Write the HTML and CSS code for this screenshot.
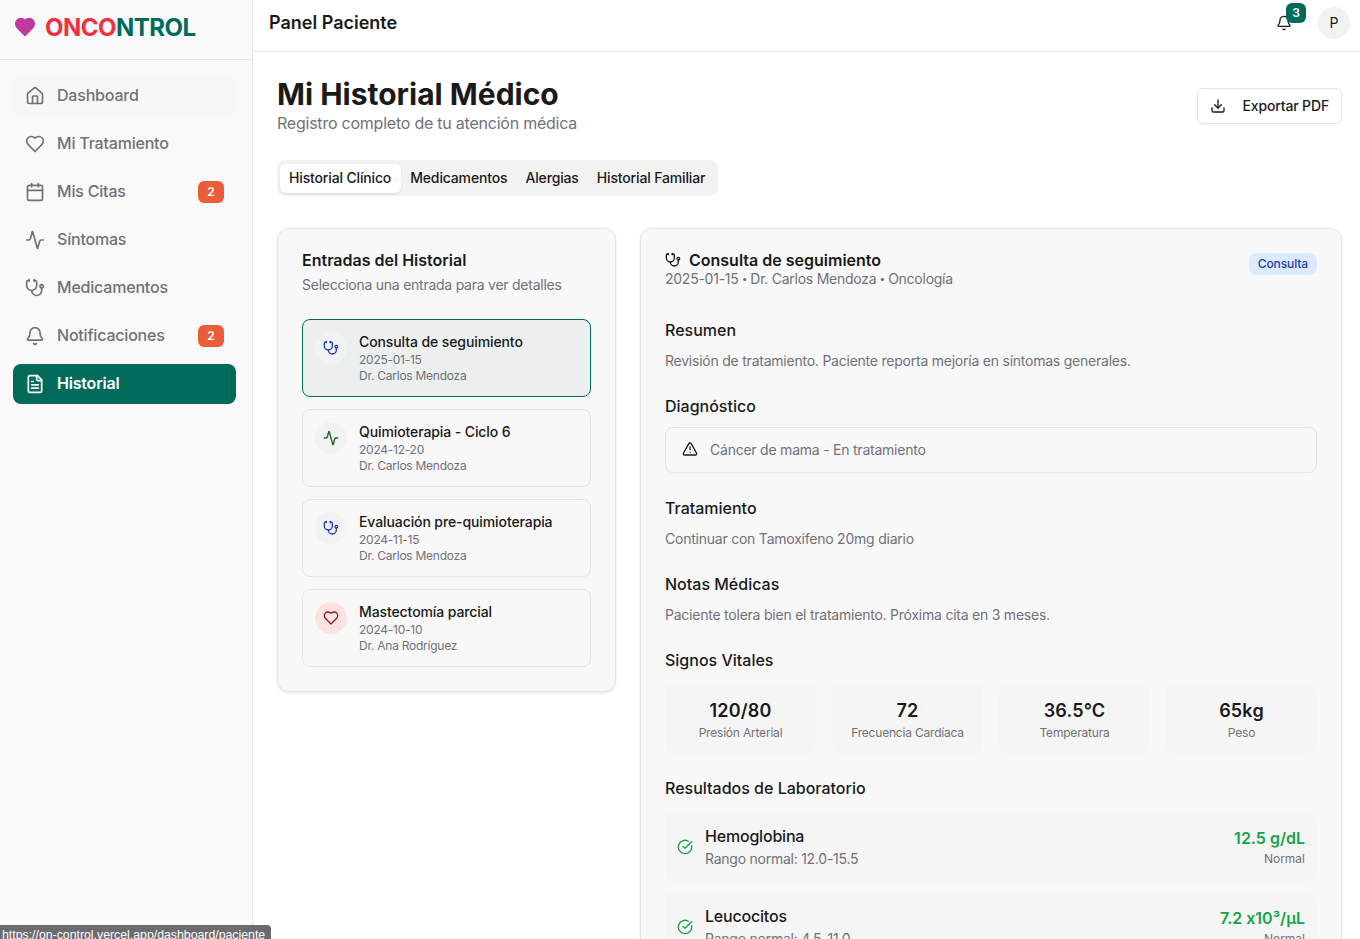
FILE: index.html
```html
<!DOCTYPE html>
<html lang="es">
<head>
    <meta charset="UTF-8">
    <meta name="viewport" content="width=device-width, initial-scale=1.0">
    <title>Mi Historial Médico - OncoControl</title>
    <link rel="stylesheet" href="styles.css">
</head>
<body>
    <svg class="sprite" xmlns="http://www.w3.org/2000/svg">
        <symbol id="i-home" viewBox="0 0 24 24"><path d="M15 21v-8a1 1 0 0 0-1-1h-4a1 1 0 0 0-1 1v8"/><path d="M3 10a2 2 0 0 1 .709-1.528l7-5.999a2 2 0 0 1 2.582 0l7 5.999A2 2 0 0 1 21 10v9a2 2 0 0 1-2 2H5a2 2 0 0 1-2-2z"/></symbol>
        <symbol id="i-heart" viewBox="0 0 24 24"><path d="M19 14c1.49-1.46 3-3.21 3-5.5A5.5 5.5 0 0 0 16.5 3c-1.76 0-3 .5-4.5 2-1.5-1.5-2.74-2-4.5-2A5.5 5.5 0 0 0 2 8.5c0 2.3 1.5 4.05 3 5.5l7 7Z"/></symbol>
        <symbol id="i-calendar" viewBox="0 0 24 24"><path d="M8 2v4"/><path d="M16 2v4"/><rect x="3" y="4" width="18" height="18" rx="2"/><path d="M3 10h18"/></symbol>
        <symbol id="i-activity" viewBox="0 0 24 24"><path d="M22 12h-2.48a2 2 0 0 0-1.93 1.46l-2.35 8.36a.25.25 0 0 1-.48 0L9.24 2.18a.25.25 0 0 0-.48 0l-2.35 8.36A2 2 0 0 1 4.49 12H2"/></symbol>
        <symbol id="i-stethoscope" viewBox="0 0 24 24"><path d="M11 2v2"/><path d="M5 2v2"/><path d="M5 3H4a2 2 0 0 0-2 2v4a6 6 0 0 0 12 0V5a2 2 0 0 0-2-2h-1"/><path d="M8 15a6 6 0 0 0 12 0v-3"/><circle cx="20" cy="10" r="2"/></symbol>
        <symbol id="i-bell" viewBox="0 0 24 24"><path d="M10.268 21a2 2 0 0 0 3.464 0"/><path d="M3.262 15.326A1 1 0 0 0 4 17h16a1 1 0 0 0 .74-1.673C19.41 13.956 18 12.499 18 8A6 6 0 0 0 6 8c0 4.499-1.411 5.956-2.738 7.326"/></symbol>
        <symbol id="i-file" viewBox="0 0 24 24"><path d="M15 2H6a2 2 0 0 0-2 2v16a2 2 0 0 0 2 2h12a2 2 0 0 0 2-2V7Z"/><path d="M14 2v4a2 2 0 0 0 2 2h4"/><path d="M10 9H8"/><path d="M16 13H8"/><path d="M16 17H8"/></symbol>
        <symbol id="i-download" viewBox="0 0 24 24"><path d="M21 15v4a2 2 0 0 1-2 2H5a2 2 0 0 1-2-2v-4"/><polyline points="7 10 12 15 17 10"/><line x1="12" y1="15" x2="12" y2="3"/></symbol>
        <symbol id="i-alert" viewBox="0 0 24 24"><path d="m21.73 18-8-14a2 2 0 0 0-3.48 0l-8 14A2 2 0 0 0 4 21h16a2 2 0 0 0 1.73-3"/><path d="M12 9v4"/><path d="M12 17h.01"/></symbol>
        <symbol id="i-check" viewBox="0 0 24 24"><path d="M21.801 10A10 10 0 1 1 17 3.335"/><path d="m9 11 3 3L22 4"/></symbol>
    </svg>

    <div class="app">
        <aside class="sidebar">
            <div class="logo">
                <svg class="logo-heart" viewBox="0 0 24 24"><use href="#i-heart"/></svg>
                <span class="logo-text"><span class="logo-red">ONCO</span><span class="logo-green">NTROL</span></span>
            </div>
            <nav class="nav">
                <a class="nav-item hovered" href="#"><svg class="icon"><use href="#i-home"/></svg><span>Dashboard</span></a>
                <a class="nav-item" href="#"><svg class="icon"><use href="#i-heart"/></svg><span>Mi Tratamiento</span></a>
                <a class="nav-item" href="#"><svg class="icon"><use href="#i-calendar"/></svg><span>Mis Citas</span><b class="nav-badge">2</b></a>
                <a class="nav-item" href="#"><svg class="icon"><use href="#i-activity"/></svg><span>Síntomas</span></a>
                <a class="nav-item" href="#"><svg class="icon"><use href="#i-stethoscope"/></svg><span>Medicamentos</span></a>
                <a class="nav-item" href="#"><svg class="icon"><use href="#i-bell"/></svg><span>Notificaciones</span><b class="nav-badge">2</b></a>
                <a class="nav-item active" href="#"><svg class="icon"><use href="#i-file"/></svg><span>Historial</span></a>
            </nav>
        </aside>

        <div class="page">
            <header class="topbar">
                <h2>Panel Paciente</h2>
                <div class="topbar-right">
                    <div class="bell">
                        <svg class="icon-sm"><use href="#i-bell"/></svg>
                        <span class="bell-badge">3</span>
                    </div>
                    <div class="avatar">P</div>
                </div>
            </header>

            <main class="content">
                <div class="page-head">
                    <div>
                        <h1>Mi Historial Médico</h1>
                        <p class="subtitle">Registro completo de tu atención médica</p>
                    </div>
                    <button class="export" type="button"><svg class="icon-sm"><use href="#i-download"/></svg>Exportar PDF</button>
                </div>

                <div class="tabs">
                    <span class="tab active">Historial Clínico</span>
                    <span class="tab">Medicamentos</span>
                    <span class="tab">Alergias</span>
                    <span class="tab">Historial Familiar</span>
                </div>

                <div class="columns">
                    <section class="card list-card">
                        <h3>Entradas del Historial</h3>
                        <p class="list-sub">Selecciona una entrada para ver detalles</p>
                        <div class="entries">
                            <div class="entry selected">
                                <div class="entry-icon blue"><svg class="icon-sm"><use href="#i-stethoscope"/></svg></div>
                                <div>
                                    <div class="entry-title">Consulta de seguimiento</div>
                                    <div class="entry-meta">2025-01-15</div>
                                    <div class="entry-meta">Dr. Carlos Mendoza</div>
                                </div>
                            </div>
                            <div class="entry">
                                <div class="entry-icon green"><svg class="icon-sm"><use href="#i-activity"/></svg></div>
                                <div>
                                    <div class="entry-title">Quimioterapia - Ciclo 6</div>
                                    <div class="entry-meta">2024-12-20</div>
                                    <div class="entry-meta">Dr. Carlos Mendoza</div>
                                </div>
                            </div>
                            <div class="entry">
                                <div class="entry-icon blue"><svg class="icon-sm"><use href="#i-stethoscope"/></svg></div>
                                <div>
                                    <div class="entry-title">Evaluación pre-quimioterapia</div>
                                    <div class="entry-meta">2024-11-15</div>
                                    <div class="entry-meta">Dr. Carlos Mendoza</div>
                                </div>
                            </div>
                            <div class="entry">
                                <div class="entry-icon red"><svg class="icon-sm"><use href="#i-heart"/></svg></div>
                                <div>
                                    <div class="entry-title">Mastectomía parcial</div>
                                    <div class="entry-meta">2024-10-10</div>
                                    <div class="entry-meta">Dr. Ana Rodríguez</div>
                                </div>
                            </div>
                        </div>
                    </section>

                    <section class="card detail-card">
                        <div class="detail-head">
                            <div>
                                <h3 class="detail-title"><svg class="icon-sm"><use href="#i-stethoscope"/></svg>Consulta de seguimiento</h3>
                                <p class="detail-meta">2025-01-15 <span class="dot">•</span> Dr. Carlos Mendoza <span class="dot">•</span> Oncología</p>
                            </div>
                            <span class="tag">Consulta</span>
                        </div>

                        <div class="block">
                            <h4>Resumen</h4>
                            <p>Revisión de tratamiento. Paciente reporta mejoría en síntomas generales.</p>
                        </div>
                        <div class="block">
                            <h4>Diagnóstico</h4>
                            <div class="diagnosis"><svg class="icon-sm"><use href="#i-alert"/></svg><span>Cáncer de mama - En tratamiento</span></div>
                        </div>
                        <div class="block">
                            <h4>Tratamiento</h4>
                            <p>Continuar con Tamoxifeno 20mg diario</p>
                        </div>
                        <div class="block">
                            <h4>Notas Médicas</h4>
                            <p>Paciente tolera bien el tratamiento. Próxima cita en 3 meses.</p>
                        </div>
                        <div class="block">
                            <h4 class="tight">Signos Vitales</h4>
                            <div class="vitals">
                                <div class="vital"><strong>120/80</strong><span>Presión Arterial</span></div>
                                <div class="vital"><strong>72</strong><span>Frecuencia Cardíaca</span></div>
                                <div class="vital"><strong>36.5°C</strong><span>Temperatura</span></div>
                                <div class="vital"><strong>65kg</strong><span>Peso</span></div>
                            </div>
                        </div>
                        <div class="block">
                            <h4 class="tight">Resultados de Laboratorio</h4>
                            <div class="labs">
                                <div class="lab">
                                    <svg class="icon-sm"><use href="#i-check"/></svg>
                                    <div class="lab-name"><strong>Hemoglobina</strong><span>Rango normal: 12.0-15.5</span></div>
                                    <div class="lab-value"><strong>12.5 g/dL</strong><span>Normal</span></div>
                                </div>
                                <div class="lab">
                                    <svg class="icon-sm"><use href="#i-check"/></svg>
                                    <div class="lab-name"><strong>Leucocitos</strong><span>Rango normal: 4.5-11.0</span></div>
                                    <div class="lab-value"><strong>7.2 x10³/μL</strong><span>Normal</span></div>
                                </div>
                            </div>
                        </div>
                    </section>
                </div>
            </main>
        </div>
    </div>

    <div class="status-url">https://on-control.vercel.app/dashboard/paciente</div>
</body>
</html>
```

FILE: styles.css
```css
* {
    box-sizing: border-box;
}
html, body {
    height: 100%;
    margin: 0;
    overflow: hidden;
}
body {
    font-family: Inter, "Noto Sans", sans-serif;
    font-feature-settings: "calt" 0;
    background-color: white;
    color: #1a1a1a;
}
h1, h2, h3, h4, p {
    margin: 0;
}
svg {
    fill: none;
    stroke: currentColor;
    stroke-width: 2;
    stroke-linecap: round;
    stroke-linejoin: round;
}
.sprite {
    display: none;
}
.app {
    display: flex;
    height: 939px;
}

/* sidebar */
.sidebar {
    flex: 0 0 253px;
    background-color: #f9f9f9;
    border-right: 1px solid #e5e5e5;
}
.logo {
    display: flex;
    align-items: center;
    gap: 9px;
    height: 60px;
    padding: 0 0 5px 14px;
    border-bottom: 1px solid #e5e5e5;
}
.logo-heart {
    width: 22px;
    height: 22px;
    fill: #c0399f;
    stroke: #c0399f;
}
.logo-text {
    font-size: 24px;
    font-weight: 700;
    letter-spacing: -0.5px;
}
.logo-red {
    color: #f0303f;
}
.logo-green {
    color: #006b5a;
}
.nav {
    display: flex;
    flex-direction: column;
    gap: 8px;
    padding: 16px 16px 16px 13px;
}
.nav-item {
    display: flex;
    align-items: center;
    height: 40px;
    padding: 0 12px;
    gap: 12px;
    border-radius: 8px;
    color: #717179;
    font-size: 16px;
    font-weight: 500;
    letter-spacing: -0.2px;
    text-decoration: none;
}
.nav-item span {
    margin-bottom: 2px;
}
.nav-item .icon {
    width: 20px;
    height: 20px;
}
.nav-item.hovered {
    background-color: #f7f7f7;
}
.nav-item.active {
    background-color: #006b5a;
    color: white;
    font-weight: 600;
}
.nav-badge {
    margin-left: auto;
    width: 26px;
    height: 22px;
    line-height: 22px;
    text-align: center;
    border-radius: 6px;
    background-color: #e95d3a;
    color: white;
    font-size: 12px;
    font-weight: 600;
}

/* top bar */
.page {
    flex: 1;
    min-width: 0;
}
.topbar {
    display: flex;
    align-items: center;
    justify-content: space-between;
    height: 52px;
    padding: 0 10px 6px 16px;
    border-bottom: 1px solid #e5e5e5;
}
.topbar h2 {
    font-size: 18px;
    font-weight: 600;
}
.topbar-right {
    display: flex;
    align-items: center;
    gap: 26px;
}
.bell {
    position: relative;
    width: 16px;
    height: 16px;
    color: #1a1a1a;
}
.icon-sm {
    display: block;
    flex: none;
    width: 16px;
    height: 16px;
}
.bell-badge {
    position: absolute;
    top: -12px;
    left: 10px;
    width: 20px;
    height: 20px;
    line-height: 20px;
    text-align: center;
    border-radius: 6px;
    background-color: #006b5a;
    color: white;
    font-size: 12px;
    font-weight: 600;
}
.avatar {
    width: 32px;
    height: 32px;
    line-height: 32px;
    text-align: center;
    border-radius: 50%;
    background-color: #f2f2f2;
    font-size: 14px;
}

/* main */
.content {
    padding: 24px 18px 0 24px;
}
.page-head {
    display: flex;
    justify-content: space-between;
    align-items: flex-start;
}
h1 {
    font-size: 30px;
    line-height: 36px;
    font-weight: 700;
}
.subtitle {
    margin-top: -1px;
    color: #717179;
    font-size: 16px;
    line-height: 24px;
    letter-spacing: -0.23px;
}
.export {
    display: flex;
    align-items: center;
    gap: 17px;
    height: 36px;
    margin-top: 12px;
    padding: 0 12px 1px;
    background-color: white;
    border: 1px solid #e5e5e5;
    border-radius: 6px;
    box-shadow: 0 1px 2px rgba(0, 0, 0, 0.05);
    color: #1a1a1a;
    font-family: inherit;
    font-size: 14px;
    font-weight: 500;
    letter-spacing: -0.15px;
}
.tabs {
    display: inline-flex;
    align-items: center;
    height: 36px;
    margin-top: 25px;
    padding: 0 4px 0 3px;
    background-color: #f2f2f2;
    border-radius: 8px;
}
.tab {
    height: 29px;
    line-height: 28px;
    padding: 0 9px;
    font-size: 14px;
    font-weight: 500;
    letter-spacing: -0.15px;
    color: #1a1a1a;
    border-radius: 6px;
}
.tab.active {
    padding-right: 10px;
    background-color: white;
    box-shadow: 0 1px 2px rgba(0, 0, 0, 0.1);
}
.columns {
    display: grid;
    grid-template-columns: 339px 1fr;
    gap: 24px;
    align-items: start;
    margin-top: 32px;
}
.card {
    background-color: #f8f8f8;
    border: 1px solid #e5e5e5;
    border-radius: 12px;
    box-shadow: 0 1px 3px rgba(0, 0, 0, 0.1);
    padding: 23px 24px 24px;
}

/* entries */
.list-card h3 {
    font-size: 16px;
    line-height: 16px;
    font-weight: 600;
}
.list-sub {
    margin-top: 7px;
    color: #717179;
    font-size: 14px;
    line-height: 20px;
    letter-spacing: -0.25px;
}
.entries {
    display: flex;
    flex-direction: column;
    gap: 12px;
    margin-top: 24px;
}
.entry {
    display: flex;
    gap: 12px;
    height: 78px;
    padding: 12px;
    border: 1px solid #e5e5e5;
    border-radius: 8px;
}
.entry.selected {
    background-color: #ebefee;
    border-color: #006b5a;
}
.entry-icon {
    display: flex;
    align-items: center;
    justify-content: center;
    flex: 0 0 32px;
    height: 32px;
    border-radius: 50%;
    background-color: #f2f2f2;
}
.entry-icon.blue {
    color: #1e40af;
}
.entry-icon.green {
    color: #166534;
}
.entry-icon.red {
    color: #991b1b;
    background-color: #fee2e2;
}
.entry-title {
    font-size: 14px;
    line-height: 20px;
    font-weight: 500;
    letter-spacing: -0.1px;
}
.entry-meta {
    color: #717179;
    font-size: 12px;
    line-height: 16px;
    letter-spacing: -0.25px;
}

/* detail */
.detail-head {
    display: flex;
    justify-content: space-between;
    align-items: flex-start;
}
.detail-title {
    display: flex;
    align-items: center;
    gap: 8px;
    font-size: 16px;
    line-height: 16px;
    font-weight: 600;
}
.detail-meta {
    margin-top: 1px;
    color: #717179;
    font-size: 14px;
    line-height: 20px;
    letter-spacing: -0.25px;
}
.dot {
    display: inline-block;
    font-size: 10px;
    margin: 0 -0.5px;
    transform: translateY(-2px);
}
.tag {
    height: 22px;
    line-height: 22px;
    margin-top: 1px;
    padding: 0 9px;
    border-radius: 8px;
    background-color: #dbeafe;
    color: #1e40af;
    font-size: 12px;
    font-weight: 500;
    letter-spacing: -0.1px;
}
.block {
    margin-top: 23px;
}
.detail-head + .block {
    margin-top: 28px;
}
.block h4 {
    font-size: 16px;
    line-height: 24px;
    font-weight: 500;
    margin-bottom: 9px;
}
.block h4.tight {
    margin-bottom: 13px;
}
.block p {
    color: #717179;
    font-size: 14px;
    line-height: 20px;
    letter-spacing: -0.23px;
}
.diagnosis {
    display: flex;
    align-items: center;
    gap: 12px;
    height: 46px;
    padding: 0 16px 2px;
    border: 1px solid #e5e5e5;
    border-radius: 8px;
    color: #717179;
    font-size: 14px;
    letter-spacing: -0.23px;
}
.diagnosis svg {
    color: #1a1a1a;
}
.vitals {
    display: grid;
    grid-template-columns: repeat(4, 1fr);
    gap: 16px;
}
.vital {
    display: flex;
    flex-direction: column;
    align-items: center;
    justify-content: center;
    height: 68px;
    border-radius: 8px;
    background-color: #f5f5f5;
}
.vital strong {
    font-size: 18px;
    line-height: 27px;
    font-weight: 600;
    letter-spacing: 0.2px;
}
.vital span {
    margin-top: 1px;
    color: #717179;
    font-size: 12px;
    line-height: 16px;
    letter-spacing: -0.2px;
}
.labs {
    display: flex;
    flex-direction: column;
    gap: 12px;
}
.lab {
    display: flex;
    align-items: center;
    gap: 12px;
    height: 68px;
    padding: 0 12px;
    border-radius: 8px;
    background-color: #f5f5f5;
}
.lab > svg {
    color: #16a34a;
}
.lab-name {
    flex: 1;
    padding-bottom: 1px;
}
.lab-name strong, .lab-name span, .lab-value strong, .lab-value span {
    display: block;
}
.lab-name strong {
    font-size: 16px;
    line-height: 24px;
    font-weight: 500;
    letter-spacing: -0.2px;
}
.lab-name span {
    margin-top: 1px;
    color: #717179;
    font-size: 14px;
    line-height: 20px;
    letter-spacing: -0.25px;
}
.lab-value {
    padding-bottom: 2px;
    text-align: right;
}
.lab-value strong {
    color: #16a34a;
    font-size: 16px;
    line-height: 24px;
    font-weight: 600;
}
.lab-value span {
    margin-top: 1px;
    color: #717179;
    font-size: 12px;
    line-height: 16px;
}

/* link preview the browser shows on hover */
.status-url {
    position: fixed;
    left: 0;
    bottom: 0;
    height: 14px;
    padding: 3px 6px 0 2px;
    background-color: #6b6b70;
    border-top-right-radius: 4px;
    color: white;
    font-family: "Liberation Sans", sans-serif;
    font-size: 12.3px;
    line-height: 14px;
    white-space: nowrap;
    overflow: hidden;
}
```
